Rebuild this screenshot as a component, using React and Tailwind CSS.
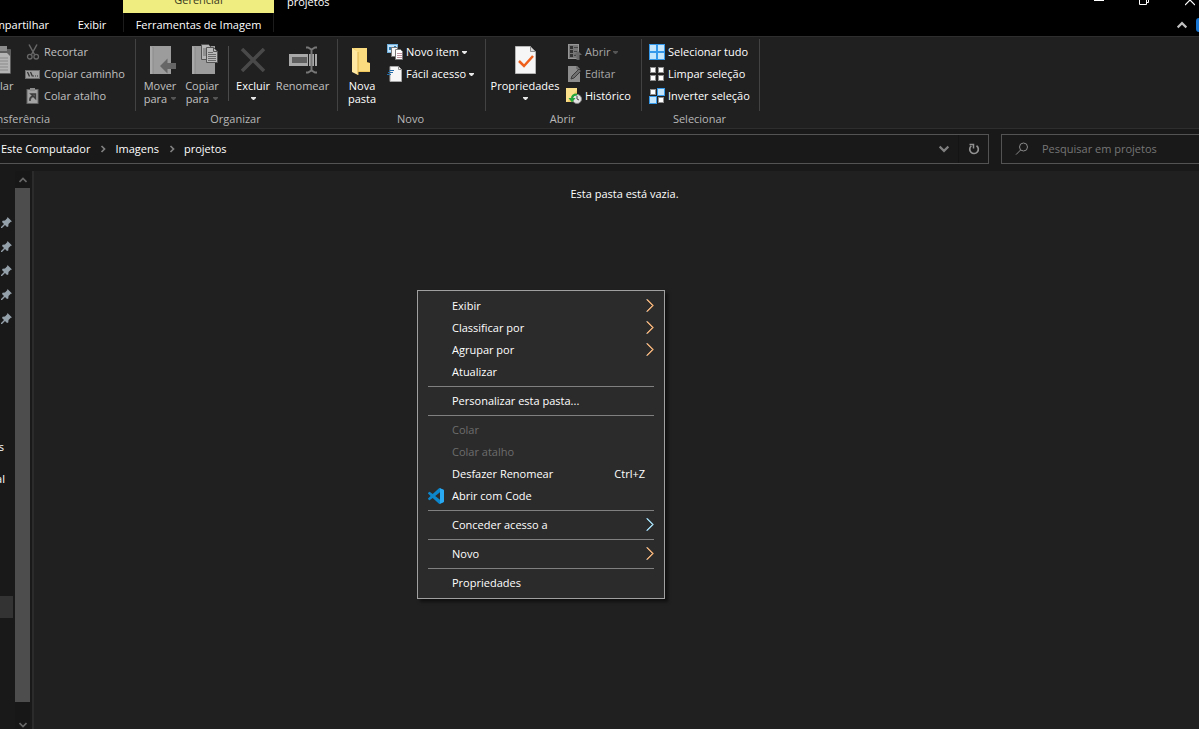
import clsx from 'clsx';

const quickAccess = ['Área de Trabalho', 'Downloads', 'Documentos', 'Imagens', 'projetos'];

const menuGroups = [
    [
        { label: 'Exibir', submenu: true },
        { label: 'Classificar por', submenu: true },
        { label: 'Agrupar por', submenu: true },
        { label: 'Atualizar' },
    ],
    [{ label: 'Personalizar esta pasta...' }],
    [
        { label: 'Colar', disabled: true },
        { label: 'Colar atalho', disabled: true },
        { label: 'Desfazer Renomear', shortcut: 'Ctrl+Z' },
        { label: 'Abrir com Code', icon: true },
    ],
    [{ label: 'Conceder acesso a', submenu: true, cool: true }],
    [{ label: 'Novo', submenu: true }],
    [{ label: 'Propriedades' }],
];

function Icon({ size = 16, className, children }) {
    return (
        <svg width={size} height={size} viewBox={`0 0 ${size} ${size}`} className={clsx('shrink-0', className)} fill="none" aria-hidden="true">
            {children}
        </svg>
    );
}

function Caret({ dim }) {
    return (
        <svg width="5" height="3" viewBox="0 0 5 3" className="shrink-0" aria-hidden="true">
            <path d="M0 0h5v1L3 3H2L0 1z" fill={dim ? '#555555' : '#e8e8e8'} />
        </svg>
    );
}

/* ---------- ribbon icons ---------- */

const PasteIcon = () => (
    <Icon size={32}>
        <rect x="7" y="5" width="20" height="25" rx="1" fill="#5e5e5e" />
        <rect x="12" y="2" width="11" height="5" fill="#8b8b8b" />
        <path d="M12 9h11l3 3v17H12z" fill="#b4b4b4" />
        <path d="M14 14h10M14 17h10M14 20h10M14 23h10M14 26h10" stroke="#8a8a8a" />
    </Icon>
);

const CutIcon = () => (
    <Icon>
        <path d="M4 0.5l5.5 10M12 0.5l-5.5 10" stroke="#686868" strokeWidth="1.5" />
        <circle cx="4.8" cy="12.7" r="2.3" stroke="#686868" strokeWidth="1.3" />
        <circle cx="11.2" cy="12.7" r="2.3" stroke="#686868" strokeWidth="1.3" />
    </Icon>
);

const CopyPathIcon = () => (
    <Icon>
        <rect x="0.5" y="4.5" width="14" height="8" fill="#a0a0a0" stroke="#6d6d6d" />
        <path d="M2.5 6l2 4.500M5.500 6l2 4.500" stroke="#333" strokeWidth="1.3" />
        <path d="M8 10h1M10 10h1M12 10h1" stroke="#333" />
    </Icon>
);

const PasteShortcutIcon = () => (
    <Icon>
        <rect x="2" y="1.500" width="11" height="14" fill="#a3a3a3" stroke="#666" />
        <rect x="5" y="0" width="5" height="3" fill="#8d8d8d" />
        <path d="M5 13c-.5-3 .5-4.500 3-4.500M6 6h4.500v4.500z" stroke="#3c3c3c" strokeWidth="1.500" fill="#3c3c3c" fillOpacity="0.6" />
    </Icon>
);

const MoveIcon = () => (
    <Icon size={32}>
        <path d="M6 2h21v28H6z" fill="#9c9c9c" />
        <path d="M6 2l3 2v26H6z" fill="#a9a9a9" />
        <path d="M9 3v27" stroke="#8a8a8a" />
        <path d="M16 22l7.500-7.500V19H32v6h-8.500v4.500z" fill="#666" />
    </Icon>
);

const CopyIcon = () => (
    <Icon size={32}>
        <path d="M6 2h23v28H6z" fill="#9c9c9c" />
        <path d="M6 2l3 2v26H6z" fill="#a9a9a9" />
        <path d="M9 3v27" stroke="#8a8a8a" />
        <path d="M15.500.500h7l3 3v12h-10z" fill="#b5b5b5" stroke="#555" />
        <path d="M17 5h6M17 7h6M17 9h6M17 11h6" stroke="#6a6a6a" />
        <path d="M20.500 3.500h7l4 4v11h-11z" fill="#b9b9b9" stroke="#555" />
        <path d="M27.500 3.500v4h4" stroke="#555" />
        <path d="M22 8.500h5M22 10.500h8M22 12.500h8M22 14.500h8M22 16.500h8" stroke="#6a6a6a" />
    </Icon>
);

const DeleteIcon = () => (
    <Icon size={32}>
        <path d="M5 5l22 22M27 5L5 27" stroke="#494949" strokeWidth="3.500" />
    </Icon>
);

const RenameIcon = () => (
    <Icon size={32}>
        <rect x="2" y="10" width="28" height="12" fill="#a8a8a8" />
        <rect x="5" y="13" width="15" height="6" fill="#5f5f5f" />
        <path d="M21.500 9v14M27.500 9v14" stroke="#202020" />
        <path d="M19 3.500h2l3.500 2 3.500-2h2M19 28.500h2l3.500-2 3.500 2h2M24.500 5v22" stroke="#777" strokeWidth="2" />
    </Icon>
);

const FolderIcon = () => (
    <Icon size={32}>
        <path d="M6 4h15v14l3 1v9H6z" fill="#efc75e" />
        <path d="M8 4h13v15h3v8H11V8z" fill="#fbdc7f" />
        <path d="M6 4l6 4v23l-6-3z" fill="#ffe9a2" />
        <path d="M12 8v23" stroke="#dcb04a" />
    </Icon>
);

const NewItemIcon = () => (
    <Icon>
        <rect x="0.500" y="0.500" width="10" height="8" fill="#bfe2fa" stroke="#6fb1dc" />
        <path d="M2 3h3v3H2zM7 2h2v2H7z" fill="#2d79ac" />
        <path d="M4.500 3.500h6v9h-6z" fill="#f5f5f5" stroke="#777" />
        <path d="M8.500 5.500h5l2 2v8h-7z" fill="#fff" stroke="#777" />
        <path d="M10 9.500h5M10 11.500h5M10 13.500h5" stroke="#bf93a0" />
    </Icon>
);

const EasyAccessIcon = () => (
    <Icon>
        <path d="M3 .500h8.500l3 3v12H3z" fill="#f7f7f7" stroke="#a5a5a5" />
        <path d="M11.500.500v3h3" stroke="#8b8b8b" />
        <path d="M2 4.500h5M1 6.500h5M0 8.500h4" stroke="#256da8" />
    </Icon>
);

const PropertiesIcon = () => (
    <Icon size={32}>
        <path d="M6.500 2.500h15l5 5v22h-20z" fill="#f6f6f6" stroke="#b5b5b5" />
        <path d="M21.500 2.500v5h5z" fill="#d9d9d9" stroke="#8f8f8f" />
        <path d="M10 17l5 5 9-10" stroke="#ee601c" strokeWidth="2.500" />
    </Icon>
);

const OpenIcon = () => (
    <Icon>
        <rect x="2.500" y="0.500" width="10" height="14" fill="#777" stroke="#969696" />
        <path d="M4 2h3v3H4zM4 6h3v3H4zM4 10h3v3H4z" fill="#333" />
        <path d="M8 3.500h4M8 7.500h3M8 11.500h2" stroke="#444" />
        <path d="M12 7l4 4h-2.500v5h-3v-5H8z" fill="#686868" />
    </Icon>
);

const EditIcon = () => (
    <Icon>
        <path d="M2 0h9l3 3v13H2z" fill="#8c8c8c" />
        <path d="M11 0v3h3" stroke="#555" />
        <path d="M5 13l1-3 7-7 2 2-7 7z" fill="#6f6f6f" stroke="#3b3b3b" />
    </Icon>
);

const HistoryIcon = () => (
    <Icon>
        <path d="M0 0h11v14H0z" fill="#fbe08b" />
        <path d="M1 14l10-12v12z" fill="#f2cd68" />
        <circle cx="11" cy="11" r="4.500" fill="#e2e2e2" stroke="#858585" />
        <path d="M11 8v3l2 1" stroke="#444" />
        <path d="M11 6.500c-3 0-5 1.500-5 4" stroke="#22a53a" strokeWidth="2" />
        <path d="M2.500 10h7L6 14.500z" fill="#22a53a" />
    </Icon>
);

const squares = [[1, 1], [9, 1], [1, 9], [9, 9]];

function SelectIcon({ on }) {
    return (
        <Icon>
            {squares.map(([x, y], i) => (
                <g key={i}>
                    {on[i] && <rect x={x - 1} y={y - 1} width="8" height="8" fill="#3699ea" />}
                    {!on[i] && <rect x={x} y={y} width="6" height="6" fill="#8f8f8f" />}
                    <rect x={on[i] ? x : x + 1} y={on[i] ? y : y + 1} width={on[i] ? 6 : 4} height={on[i] ? 6 : 4} fill={on[i] ? '#c6e6fc' : '#ffffff'} />
                </g>
            ))}
        </Icon>
    );
}

function CodeIcon() {
    return (
        <svg width="16" height="16" viewBox="0 0 24 24" aria-hidden="true">
            <path
                fill="#0d86cc"
                d="M23.15 2.587L18.21.21a1.494 1.494 0 0 0-1.705.29l-9.46 8.63-4.12-3.128a.999.999 0 0 0-1.276.057L.327 7.261A1 1 0 0 0 .326 8.74L3.899 12 .326 15.26a1 1 0 0 0 .001 1.479L1.65 17.94a.999.999 0 0 0 1.276.057l4.12-3.128 9.46 8.63a1.492 1.492 0 0 0 1.704.29l4.942-2.377A1.5 1.5 0 0 0 24 20.06V3.939a1.5 1.5 0 0 0-.85-1.352zm-5.146 14.861L10.826 12l7.178-5.448v10.896z"
            />
            <path fill="#2aa9f3" d="M18 .2l5.150 2.387A1.500 1.500 0 0 1 24 3.940v16.120a1.500 1.500 0 0 1-.85 1.350L18 23.800z" />
        </svg>
    );
}

const PinIcon = () => (
    <svg width="12" height="11" viewBox="-1 0 12 11" aria-hidden="true">
        <path d="M6.500 0L11 4.500l-1.200.300-2.300 2.300-.200 2.400-1.300.500-2-2L1 11H0v-1l3-3-2-2 .6-1.200 2.400-.3L6.200 1.300z" fill="#94a0aa" />
    </svg>
);

function Chevron({ dir, color = '#808080', size = 8 }) {
    const d = {
        right: 'M2.500 1l3 3-3 3',
        down: 'M0.500 2l3.500 3.500L7.500 2',
        up: 'M0.500 6l3.500-3.500L7.500 6',
    }[dir];
    return (
        <svg width={size} height={size} viewBox="0 0 8 8" fill="none" className="shrink-0" aria-hidden="true">
            <path d={d} stroke={color} strokeWidth="1.700" />
        </svg>
    );
}

/* ---------- ribbon ---------- */

function Group({ title, className, captionClass = 'justify-center pr-0.5', children }) {
    return (
        <section className="flex shrink-0">
            <div className={clsx('flex flex-col', className)}>
                <div className="flex h-[74px] pt-1">{children}</div>
                <div className={clsx('flex text-[#b8b8b8]', captionClass)}>{title}</div>
            </div>
            <div className="mt-0.5 mb-[17px] w-px bg-[#424242]" />
        </section>
    );
}

function BigButton({ icon, label, second, dim, caret, caretDim, className }) {
    return (
        <button className={clsx('flex shrink-0 flex-col items-center pt-[3px] leading-[13px]', dim ? 'text-[#c0c0c0]' : 'text-white', className)}>
            {icon}
            <span className="mt-[3px] whitespace-nowrap">{label}</span>
            <span className="flex h-[13px] items-center gap-1">
                {second}
                {caret && <Caret dim={caretDim} />}
            </span>
        </button>
    );
}

function SmallButton({ icon, label, color = 'text-white', caret, caretDim }) {
    return (
        <button className={clsx('flex h-[22px] items-center gap-[3px] whitespace-nowrap', color)}>
            {icon}
            <span>{label}</span>
            {caret && <Caret dim={caretDim} />}
        </button>
    );
}

function Ribbon() {
    return (
        <div className="flex h-[93px] shrink-0 overflow-hidden border-y border-[#2e2e2e] bg-[#202020]">
            <Group title="Transferência" className="w-[135px]" captionClass="w-[50px] justify-end">
                <div className="flex w-[25px] shrink-0 justify-end pr-[11px]">
                    <BigButton icon={<PasteIcon />} label="Colar" dim className="w-[28px]" />
                </div>
                <div>
                    <SmallButton icon={<CutIcon />} label="Recortar" color="text-[#c0c0c0]" />
                    <SmallButton icon={<CopyPathIcon />} label="Copiar caminho" color="text-[#c0c0c0]" />
                    <SmallButton icon={<PasteShortcutIcon />} label="Colar atalho" color="text-[#c0c0c0]" />
                </div>
            </Group>
            <Group title="Organizar" className="w-[201px]">
                <BigButton icon={<MoveIcon />} label="Mover" second="para" dim caret caretDim className="ml-[3px] w-[42px]" />
                <BigButton icon={<CopyIcon />} label="Copiar" second="para" dim caret caretDim className="w-[42px]" />
                <div className="mx-[5px] mt-[5px] h-[55px] w-px bg-[#4a4a4a]" />
                <BigButton icon={<DeleteIcon />} label="Excluir" caret className="w-[38px]" />
                <BigButton icon={<RenameIcon />} label="Renomear" dim className="w-[61px]" />
            </Group>
            <Group title="Novo" className="w-[147px]">
                <BigButton icon={<FolderIcon />} label="Nova" second="pasta" className="ml-0.5 w-[44px]" />
                <div className="ml-[3px]">
                    <SmallButton icon={<NewItemIcon />} label="Novo item" caret />
                    <SmallButton icon={<EasyAccessIcon />} label="Fácil acesso" caret />
                </div>
            </Group>
            <Group title="Abrir" className="w-[155px]">
                <BigButton icon={<PropertiesIcon />} label="Propriedades" caret className="ml-[3px] w-[72px]" />
                <div className="ml-[5px]">
                    <SmallButton icon={<OpenIcon />} label="Abrir" color="text-[#a8a8a8]" caret caretDim />
                    <SmallButton icon={<EditIcon />} label="Editar" color="text-[#a8a8a8]" />
                    <SmallButton icon={<HistoryIcon />} label="Histórico" />
                </div>
            </Group>
            <Group title="Selecionar" className="w-[117px]">
                <div className="ml-[7px]">
                    <SmallButton icon={<SelectIcon on={[true, true, true, true]} />} label="Selecionar tudo" />
                    <SmallButton icon={<SelectIcon on={[false, false, false, false]} />} label="Limpar seleção" />
                    <SmallButton icon={<SelectIcon on={[false, true, true, false]} />} label="Inverter seleção" />
                </div>
            </Group>
        </div>
    );
}

function TitleBar() {
    return (
        <header className="h-9 shrink-0 overflow-hidden bg-black text-white">
            <div className="flex h-[13px] items-end overflow-hidden">
                <div className="ml-[123px] flex h-[26px] w-[151px] items-end justify-center bg-[#efed80] pb-[5px] text-[#3c3c22]">Gerencial</div>
                <h1 className="ml-[13px] pb-[3px]">projetos</h1>
                <div className="ml-auto flex h-[13px]">
                    <button aria-label="Minimizar" className="mr-[35px] h-px w-[10px] bg-white" />
                    <button aria-label="Restaurar" className="mr-[36px]">
                        <svg width="10" height="13" viewBox="0 0 10 13" fill="none" stroke="#fff" className="block">
                            <path d="M.500-4v8.500h7V-4M8 2.500h1.500V-4" />
                        </svg>
                    </button>
                    <button aria-label="Fechar" className="mr-[4px]">
                        <svg width="10" height="13" viewBox="0 0 10 13" fill="none" stroke="#fff" strokeWidth="1.200" className="block">
                            <path d="M0-5l10 10M10-5L0 5" />
                        </svg>
                    </button>
                </div>
            </div>
            <nav className="flex h-[23px] items-center">
                <button className="flex w-[49px] shrink-0 justify-end">Compartilhar</button>
                <button className="w-[74px] pl-3">Exibir</button>
                <button className="h-[19px] w-[151px] self-start border-x border-[#1c1c1c] pt-1">Ferramentas de Imagem</button>
                <button aria-label="Minimizar a faixa de opções" className="ml-auto">
                    <Chevron dir="up" color="#c0c0c0" size={10} />
                </button>
                <button aria-label="Ajuda" className="ml-[9px] h-[14px] w-[3px] rounded-l-full bg-[#1976d2]" />
            </nav>
        </header>
    );
}

function AddressRow() {
    return (
        <div className="flex h-[42px] shrink-0 items-start gap-3 bg-[#191919] pt-[5px]">
            <nav className="flex h-[30px] flex-1 items-center border-y border-r border-[#535353] text-white">
                <a href="#computador" className="pl-px">Este Computador</a>
                <span className="mr-2 ml-[9px]"><Chevron dir="right" /></span>
                <a href="#imagens">Imagens</a>
                <span className="mr-2 ml-[9px]"><Chevron dir="right" /></span>
                <a href="#projetos">projetos</a>
                <button aria-label="Locais anteriores" className="mr-[9px] ml-auto">
                    <Chevron dir="down" size={10} />
                </button>
                <button aria-label="Atualizar" className="flex h-full w-[30px] items-center justify-center border-l border-[#141414]">
                    <Icon size={12}>
                        <path d="M8.500 2.700a4.300 4.300 0 1 1-5.200.2" stroke="#929292" strokeWidth="1.700" />
                        <path d="M1.500 1.500h4v4" stroke="#929292" strokeWidth="1.500" />
                    </Icon>
                </button>
            </nav>
            <label className="flex h-[30px] w-[198px] items-center border-y border-l border-[#535353] pl-[13px]">
                <Icon size={14}>
                    <circle cx="8.500" cy="5" r="4" stroke="#8a8a8a" />
                    <path d="M5.600 8L1 12.600" stroke="#8a8a8a" />
                </Icon>
                <input
                    type="search"
                    aria-label="Pesquisar em projetos"
                    placeholder="Pesquisar em projetos"
                    className="ml-[13px] w-[150px] bg-transparent text-white outline-none placeholder:text-[#767676]"
                />
            </label>
        </div>
    );
}

function Sidebar() {
    return (
        <aside className="flex w-[34px] shrink-0 overflow-hidden bg-[#191919] text-white">
            <div className="w-[15px] shrink-0 overflow-hidden pt-[39px]">
                {quickAccess.map((name) => (
                    <button key={name} aria-label={name} className="flex h-6 w-full items-center">
                        <PinIcon />
                    </button>
                ))}
                <button className="mt-[105px] flex h-6 w-1 items-center justify-end">s</button>
                <button className="mt-2 flex h-6 w-[5px] items-center justify-end">al</button>
                <div className="mt-[105px] h-[22px] w-[13px] bg-[#333333]" />
            </div>
            <div className="flex w-[15px] shrink-0 flex-col items-center bg-[#171717]">
                <div className="flex h-[17px] items-center"><Chevron dir="up" color="#686868" /></div>
                <div className="w-full flex-1 bg-[#4d4d4d]" />
                <div className="flex h-[27px] items-end"><Chevron dir="down" color="#686868" /></div>
            </div>
            <div className="ml-0.5 w-0.5 bg-[#2b2b2b]" />
        </aside>
    );
}

function ContextMenu() {
    return (
        <div role="menu" className="absolute top-[290px] left-[417px] w-[248px] border border-[#a0a0a0] bg-[#2b2b2b] py-1 text-white shadow-[3px_3px_3px_rgba(0,0,0,0.5)]">
            {menuGroups.map((items, i) => (
                <div key={i}>
                    {i > 0 && <hr className="mx-[10px] my-[3px] border-[#808080]" />}
                    {items.map((item) => (
                        <button
                            key={item.label}
                            role="menuitem"
                            disabled={item.disabled}
                            className={clsx('flex h-[22px] w-full items-center px-[10px] text-left', item.disabled && 'text-[#6d6d6d]')}
                        >
                            <span className="w-6 shrink-0">{item.icon && <CodeIcon />}</span>
                            <span className="flex-1 whitespace-nowrap">{item.label}</span>
                            {item.shortcut && <span className="mr-[9px]">{item.shortcut}</span>}
                            {item.submenu && (
                                <svg width="8" height="14" viewBox="0 0 8 14" fill="none" aria-hidden="true">
                                    <path d="M.500.500l6 6-6 6" stroke="#8cc4f4" />
                                    <path d="M1 .500l6 6-6 6" stroke={item.cool ? '#a6dcf0' : '#f8b070'} strokeWidth="1.200" />
                                </svg>
                            )}
                        </button>
                    ))}
                </div>
            ))}
        </div>
    );
}

function App() {
    return (
        <div className="relative flex h-screen flex-col overflow-hidden bg-[#202020] font-['Open_Sans','Noto_Sans',sans-serif] text-[11px] leading-4">
            <TitleBar />
            <Ribbon />
            <AddressRow />
            <div className="flex min-h-0 flex-1">
                <Sidebar />
                <main className="flex-1 pt-[15px] pl-4 text-center text-white">Esta pasta está vazia.</main>
            </div>
            <ContextMenu />
        </div>
    );
}

export default App;
